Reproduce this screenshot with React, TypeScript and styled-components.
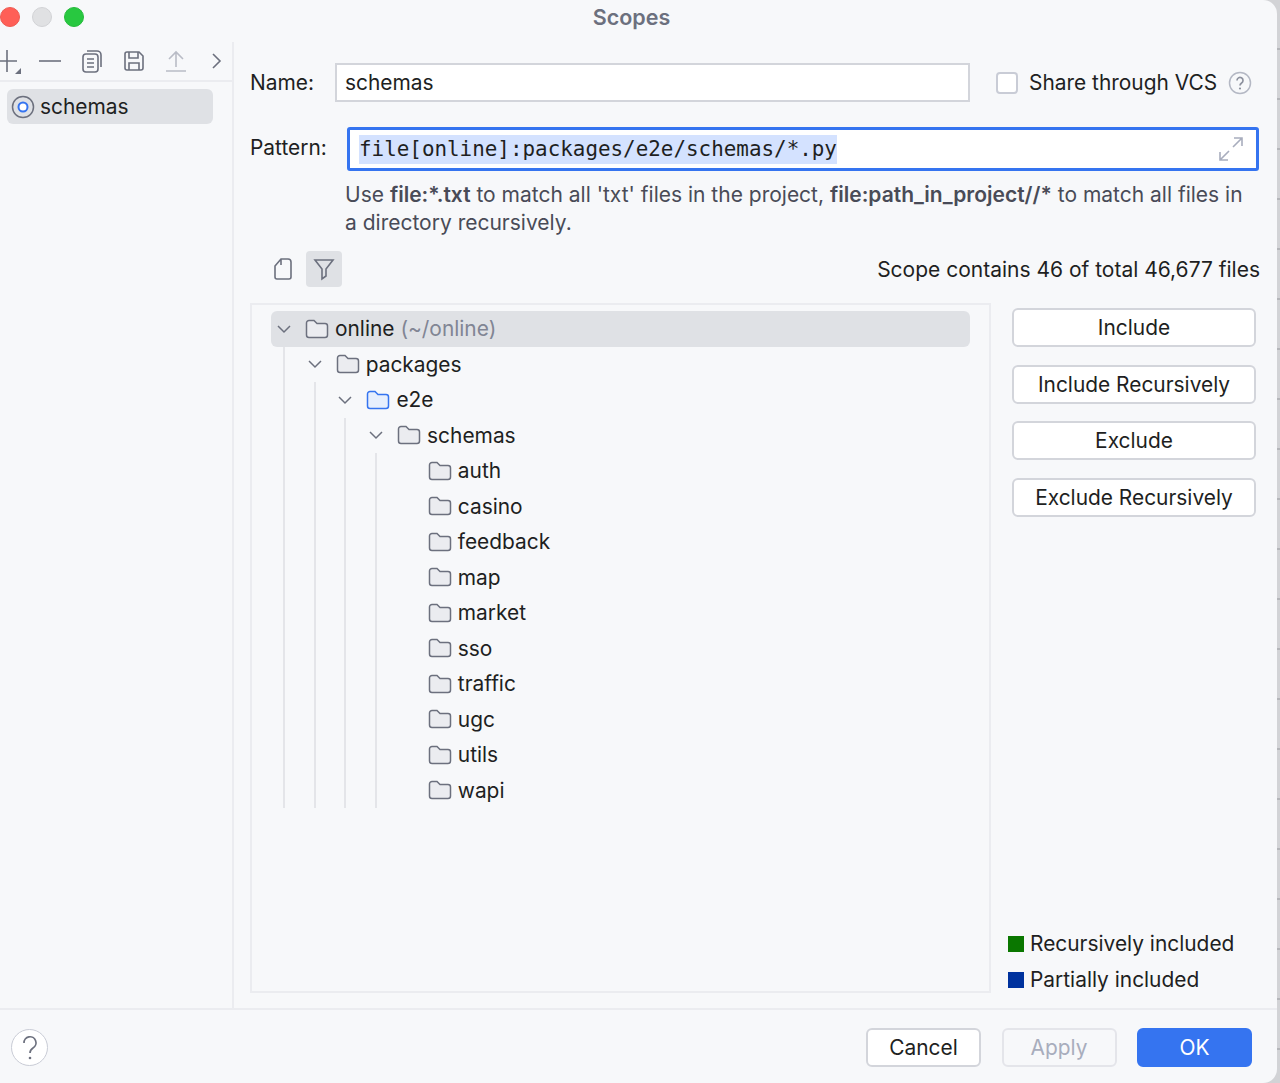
import styled, { createGlobalStyle } from "styled-components";

const GlobalStyle = createGlobalStyle`
  html, body {
    margin: 0;
    padding: 0;
    background: repeating-linear-gradient(#d2d3d6 0 48px, #b4b5b9 48px 50px);
  }
  body {
    width: 1280px;
    height: 1083px;
    overflow: hidden;
    font-family: Inter, "Liberation Sans", sans-serif;
    font-size: 20.9px;
    color: #1e1f22;
  }
`;

const Window = styled.div`
  width: 1277px;
  height: 1083px;
  display: flex;
  flex-direction: column;
  background: #f7f8fa;
  border-top-right-radius: 14px;
  border-bottom-right-radius: 14px;
  overflow: hidden;
`;

const TitleBar = styled.header`
  height: 42px;
  flex: none;
  display: flex;
  align-items: center;
  padding-bottom: 8px;
  box-sizing: border-box;
`;

const TrafficLights = styled.div`
  width: 84px;
  display: flex;
  gap: 12px;
`;

const Light = styled.span<{ $color: string; $edge: string }>`
  width: 20px;
  height: 20px;
  box-sizing: border-box;
  border-radius: 50%;
  background: ${({ $color }) => $color};
  border: 1px solid ${({ $edge }) => $edge};
`;

const Title = styled.h1`
  flex: 1;
  margin: 0;
  padding-right: 98px;
  text-align: center;
  font-size: 21.5px;
  font-weight: 600;
  color: #6c707e;
`;

const Body = styled.div`
  flex: 1;
  min-height: 0;
  display: flex;
  border-bottom: 2px solid #ebecf0;
`;

const Sidebar = styled.aside`
  width: 234px;
  flex: none;
  box-sizing: border-box;
  border-right: 2px solid #ebecf0;
  overflow: hidden;
`;

const SideToolbar = styled.div`
  height: 40px;
  display: flex;
  align-items: center;
  margin-left: -5px;
  gap: 16px;
  border-bottom: 2px solid #ebecf0;
  box-sizing: border-box;
`;

const ToolIcon = styled.svg<{ $disabled?: boolean }>`
  width: 26px;
  height: 26px;
  flex: none;
  fill: none;
  stroke: ${({ $disabled }) => ($disabled ? "#b9bcc6" : "#6c707e")};
  stroke-width: 1.6;
`;

const ScopeItem = styled.div`
  display: flex;
  align-items: center;
  gap: 5px;
  height: 35px;
  margin: 7px 19px 0 7px;
  padding-left: 4px;
  border-radius: 6px;
  background: #dfe1e5;
`;

const Main = styled.main`
  flex: 1;
  min-width: 0;
  display: flex;
  flex-direction: column;
  padding: 21px 18px 15px 16px;
`;

const FieldRow = styled.div`
  display: flex;
  align-items: center;
`;

const FieldLabel = styled.label`
  width: 85px;
  flex: none;
`;

const NameInput = styled.div`
  width: 635px;
  height: 39px;
  box-sizing: border-box;
  display: flex;
  align-items: center;
  padding-left: 8px;
  background: #fff;
  border: 2px solid #d3d5db;
`;

const CheckBox = styled.span`
  width: 22px;
  height: 22px;
  margin-left: 26px;
  flex: none;
  box-sizing: border-box;
  background: #fff;
  border: 2px solid #c9ccd6;
  border-radius: 4px;
`;

const CheckLabel = styled.span`
  margin-left: 11px;
  white-space: nowrap;
`;

const HelpIcon = styled.svg`
  width: 24px;
  height: 24px;
  margin-left: 11px;
  flex: none;
`;

const PatternRow = styled(FieldRow)`
  margin-top: 25px;
  align-items: flex-start;
`;

const PatternLabel = styled(FieldLabel)`
  width: 97px;
  margin-top: 8px;
`;

const PatternInput = styled.div`
  width: 912px;
  height: 44px;
  box-sizing: border-box;
  display: flex;
  align-items: center;
  justify-content: space-between;
  padding: 0 12px 0 9px;
  background: #fff;
  border: 3px solid #3574f0;
  border-radius: 3px;
`;

const PatternText = styled.span`
  font-family: "DejaVu Sans Mono", monospace;
  font-size: 20.9px;
  line-height: 29px;
  background: #d4e2ff;
`;

const Hint = styled.p`
  margin: 10px 0 0 95px;
  width: 905px;
  font-size: 21px;
  line-height: 28px;
  color: #494b57;

  b {
    font-weight: 600;
  }
`;

const FilterRow = styled.div`
  margin-top: 14px;
  display: flex;
  align-items: center;
  height: 36px;
`;

const FilterButton = styled.span<{ $active?: boolean }>`
  width: 36px;
  height: 36px;
  display: flex;
  align-items: center;
  justify-content: center;
  border-radius: 4px;
  margin-left: ${({ $active }) => ($active ? "5px" : "15px")};
  background: ${({ $active }) => ($active ? "#dfe1e5" : "transparent")};
`;

const ScopeCount = styled.span`
  margin-left: auto;
  margin-right: -1px;
  font-size: 21px;
  white-space: nowrap;
`;

const Content = styled.div`
  flex: 1;
  min-height: 0;
  margin-top: 16px;
  display: flex;
`;

const TreePanel = styled.div`
  width: 741px;
  flex: none;
  box-sizing: border-box;
  border: 2px solid #ebecf0;
  padding: 6px 19px;
`;

const TreeRow = styled.div<{ $depth: number; $selected?: boolean }>`
  height: 35.5px;
  display: flex;
  align-items: center;
  box-sizing: border-box;
  padding-left: ${({ $depth }) => 6 + $depth * 30.7}px;
  border-radius: 6px;
  position: relative;
  background: ${({ $selected }) => ($selected ? "#dfe1e5" : "transparent")};
`;

const Guide = styled.span<{ $depth: number }>`
  position: absolute;
  left: ${({ $depth }) => 12 + $depth * 30.7}px;
  top: 0;
  bottom: 0;
  width: 2px;
  background: #e4e5e9;
`;

const TreeLabel = styled.span`
  margin-left: 6px;
`;

const Muted = styled.span`
  color: #818594;
`;

const ChevronSlot = styled.svg`
  flex: none;
  width: 14px;
  height: 10px;
  margin-right: 14px;
  fill: none;
  stroke: #6c707e;
  stroke-width: 1.5;
`;

const ChevronSpacer = styled.span`
  width: 28px;
  flex: none;
`;

const Actions = styled.div`
  flex: 1;
  display: flex;
  flex-direction: column;
  margin-left: 21px;
  padding-top: 5px;
`;

const ActionButton = styled.button`
  width: 244px;
  height: 39px;
  flex: none;
  margin-bottom: 17.5px;
  padding: 0;
  background: #fff;
  border: 2px solid #d3d5db;
  border-radius: 6px;
  font: inherit;
  color: inherit;
`;

const Legend = styled.div`
  margin-top: auto;
  display: flex;
  flex-direction: column;
  gap: 9px;
  margin-left: -4px;
`;

const LegendItem = styled.div`
  display: flex;
  align-items: center;
  gap: 6px;
  height: 27px;
  white-space: nowrap;
`;

const Swatch = styled.span<{ $color: string }>`
  width: 16px;
  height: 16px;
  background: ${({ $color }) => $color};
`;

const Footer = styled.footer`
  height: 73px;
  flex: none;
  display: flex;
  align-items: center;
  padding: 2px 25px 0 11px;
  box-sizing: border-box;
`;

const HelpButton = styled.span`
  width: 37px;
  height: 37px;
  box-sizing: border-box;
  display: flex;
  align-items: center;
  justify-content: center;
  background: #fff;
  border: 1.5px solid #c9ccd6;
  border-radius: 50%;
`;

const FooterButton = styled.button<{ $kind?: "primary" | "disabled" }>`
  width: 115px;
  height: 39px;
  padding: 0;
  margin-left: 20.5px;
  border-radius: 6px;
  font: inherit;
  box-sizing: border-box;
  border: 2px solid
    ${({ $kind }) =>
      $kind === "primary" ? "#3574f0" : $kind === "disabled" ? "#e4e5ea" : "#d3d5db"};
  background: ${({ $kind }) =>
    $kind === "primary" ? "#3574f0" : $kind === "disabled" ? "transparent" : "#fff"};
  color: ${({ $kind }) =>
    $kind === "primary" ? "#fff" : $kind === "disabled" ? "#a8adbd" : "#1e1f22"};
`;

const FooterSpacer = styled.div`
  flex: 1;
`;

function Folder({ blue }: { blue?: boolean }) {
  return (
    <svg width="24" height="22" viewBox="0 0 24 22" style={{ flex: "none" }}>
      <path
        d="M1.5 5a2.500 2.500 0 0 1 2.500-2.500h5l3 3h8a2.500 2.500 0 0 1 2.500 2.500v9a2.500 2.500 0 0 1-2.500 2.500H4a2.500 2.500 0 0 1-2.500-2.500z"
        fill={blue ? "#e7effd" : "#ebecf0"}
        stroke={blue ? "#3574f0" : "#6c707e"}
        strokeWidth="1.5"
      />
    </svg>
  );
}

function Chevron() {
  return (
    <ChevronSlot viewBox="0 0 14 10">
      <path d="M1 2l6 6 6-6" />
    </ChevronSlot>
  );
}

const folders = ["auth", "casino", "feedback", "map", "market", "sso", "traffic", "ugc", "utils", "wapi"];

export default function App() {
  return (
    <>
      <GlobalStyle />
      <Window>
        <TitleBar>
          <TrafficLights>
            <Light $color="#ff5f57" $edge="#ee5b52" />
            <Light $color="#e0e1e3" $edge="#d2d3d6" />
            <Light $color="#28c840" $edge="#25bb3b" />
          </TrafficLights>
          <Title>Scopes</Title>
        </TitleBar>

        <Body>
          <Sidebar>
            <SideToolbar>
              <ToolIcon viewBox="0 0 26 26">
                <path d="M12 2v22M0 13h22" />
                <path d="M26 26h-6l6-6z" fill="#6c707e" stroke="none" />
              </ToolIcon>
              <ToolIcon viewBox="0 0 26 26">
                <path d="M2 13h22" />
              </ToolIcon>
              <ToolIcon viewBox="0 0 26 26">
                <rect x="4" y="6" width="15" height="18" rx="3" />
                <path d="M8 3h10a4 4 0 0 1 4 4v12M8 11h7M8 15h7M8 19h7" />
              </ToolIcon>
              <ToolIcon viewBox="0 0 26 26">
                <path d="M4 6a2 2 0 0 1 2-2h12l4 4v12a2 2 0 0 1-2 2H6a2 2 0 0 1-2-2z" />
                <path d="M8 4v6h9V4M8 22v-7h10v7" />
              </ToolIcon>
              <ToolIcon viewBox="0 0 26 26" $disabled>
                <path d="M13 19V4M6 11l7-7 7 7M3 23h20" />
              </ToolIcon>
              <ToolIcon viewBox="0 0 26 26">
                <path d="M8 6l7 7-7 7" />
              </ToolIcon>
            </SideToolbar>
            <ScopeItem>
              <svg width="24" height="24" viewBox="0 0 24 24">
                <circle cx="12" cy="12" r="10.500" fill="none" stroke="#6c707e" strokeWidth="1.5" />
                <circle cx="12" cy="12" r="4.500" fill="#fff" stroke="#3574f0" strokeWidth="2" />
              </svg>
              schemas
            </ScopeItem>
          </Sidebar>

          <Main>
            <FieldRow>
              <FieldLabel>Name:</FieldLabel>
              <NameInput>schemas</NameInput>
              <CheckBox />
              <CheckLabel>Share through VCS</CheckLabel>
              <HelpIcon viewBox="0 0 24 24">
                <circle cx="12" cy="12" r="10.500" fill="none" stroke="#b4b8c4" strokeWidth="1.5" />
                <path d="M9 9.500a3 3 0 1 1 4.600 2.500c-1 .7-1.600 1.200-1.600 2.500" fill="none" stroke="#8d919e" strokeWidth="1.7" />
                <circle cx="12" cy="17.500" r="1.100" fill="#8d919e" />
              </HelpIcon>
            </FieldRow>

            <PatternRow>
              <PatternLabel>Pattern:</PatternLabel>
              <PatternInput>
                <PatternText>file[online]:packages/e2e/schemas/*.py</PatternText>
                <svg width="26" height="26" viewBox="0 0 26 26">
                  <path d="M15 11l9-9M16 2h8v8M11 15l-9 9M2 16v8h8" fill="none" stroke="#a8adbd" strokeWidth="1.6" />
                </svg>
              </PatternInput>
            </PatternRow>

            <Hint>
              Use <b>file:*.txt</b> to match all 'txt' files in the project, <b>file:path_in_project//*</b> to match all files in a directory recursively.
            </Hint>

            <FilterRow>
              <FilterButton>
                <svg width="20" height="24" viewBox="0 0 20 24">
                  <path d="M2 9l6-7h7a3 3 0 0 1 3 3v15a2 2 0 0 1-2 2H4a2 2 0 0 1-2-2zM8 2v6" fill="none" stroke="#6c707e" strokeWidth="1.6" />
                </svg>
              </FilterButton>
              <FilterButton $active>
                <svg width="22" height="24" viewBox="0 0 22 24">
                  <path d="M2 3h18l-7 9v7l-4 3V12z" fill="none" stroke="#6c707e" strokeWidth="1.6" />
                </svg>
              </FilterButton>
              <ScopeCount>Scope contains 46 of total 46,677 files</ScopeCount>
            </FilterRow>

            <Content>
              <TreePanel>
                <TreeRow $depth={0} $selected>
                  <Chevron />
                  <Folder />
                  <TreeLabel>
                    online <Muted>(~/online)</Muted>
                  </TreeLabel>
                </TreeRow>
                <TreeRow $depth={1}>
                  <Guide $depth={0} />
                  <Chevron />
                  <Folder />
                  <TreeLabel>packages</TreeLabel>
                </TreeRow>
                <TreeRow $depth={2}>
                  <Guide $depth={0} />
                  <Guide $depth={1} />
                  <Chevron />
                  <Folder blue />
                  <TreeLabel>e2e</TreeLabel>
                </TreeRow>
                <TreeRow $depth={3}>
                  <Guide $depth={0} />
                  <Guide $depth={1} />
                  <Guide $depth={2} />
                  <Chevron />
                  <Folder />
                  <TreeLabel>schemas</TreeLabel>
                </TreeRow>
                {folders.map((name) => (
                  <TreeRow key={name} $depth={4}>
                    <Guide $depth={0} />
                    <Guide $depth={1} />
                    <Guide $depth={2} />
                    <Guide $depth={3} />
                    <ChevronSpacer />
                    <Folder />
                    <TreeLabel>{name}</TreeLabel>
                  </TreeRow>
                ))}
              </TreePanel>

              <Actions>
                <ActionButton>Include</ActionButton>
                <ActionButton>Include Recursively</ActionButton>
                <ActionButton>Exclude</ActionButton>
                <ActionButton>Exclude Recursively</ActionButton>
                <Legend>
                  <LegendItem>
                    <Swatch $color="#0a7700" />
                    Recursively included
                  </LegendItem>
                  <LegendItem>
                    <Swatch $color="#00329e" />
                    Partially included
                  </LegendItem>
                </Legend>
              </Actions>
            </Content>
          </Main>
        </Body>

        <Footer>
          <HelpButton>
            <svg width="20" height="28" viewBox="0 0 20 28">
              <path d="M4 9a6 6 0 1 1 9 5c-2 1.300-3 2.500-3 5" fill="none" stroke="#6c707e" strokeWidth="1.7" />
              <circle cx="10" cy="24" r="1.300" fill="#6c707e" />
            </svg>
          </HelpButton>
          <FooterSpacer />
          <FooterButton>Cancel</FooterButton>
          <FooterButton $kind="disabled">Apply</FooterButton>
          <FooterButton $kind="primary">OK</FooterButton>
        </Footer>
      </Window>
    </>
  );
}
